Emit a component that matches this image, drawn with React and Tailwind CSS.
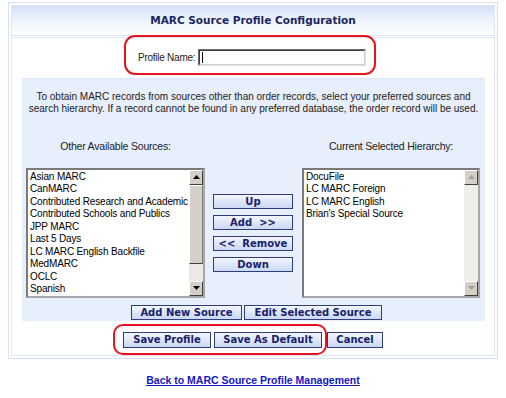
import React from "react";

const btn =
  "h-[15px] border border-[#2f3d7c] bg-gradient-to-b from-[#f2f6fe] to-[#cbd8f3] text-[#17226a] font-bold text-[10px] leading-[13px] flex items-center justify-center whitespace-nowrap";
const vfont = { fontFamily: '"DejaVu Sans", Verdana, sans-serif' };
const afont = { fontFamily: '"Liberation Sans", Arial, sans-serif' };

function Arrow({ dir, disabled }) {
  return (
    <div className="w-[14px] h-[15px] bg-[#d4d0c8] border border-t-white border-l-white border-b-[#404040] border-r-[#404040] flex items-center justify-center shrink-0">
      <svg width="7" height="4" viewBox="0 0 7 4">
        {dir === "up" ? (
          <polygon points="3.5,0 7,4 0,4" fill={disabled ? "#a0a0a0" : "#000"} />
        ) : (
          <polygon points="0,0 7,0 3.5,4" fill={disabled ? "#a0a0a0" : "#000"} />
        )}
      </svg>
    </div>
  );
}

function ListBox({ items, active, w }) {
  return (
    <div
      className={
        (w || "w-[179px]") +
        " h-[130px] border-2 border-t-[#7a7a7a] border-l-[#7a7a7a] border-b-[#a8a8a8] border-r-[#a8a8a8] bg-white flex"
      }
    >
      <div className="flex-1 pl-[2px] pt-[1px] overflow-hidden" style={afont}>
        {items.map((t) => (
          <div key={t} className="text-[10px] tracking-[-0.15px] leading-[12.5px] text-black whitespace-nowrap">
            {t}
          </div>
        ))}
      </div>
      <div className="w-[14px] flex flex-col bg-[#eeece8]">
        <Arrow dir="up" disabled={!active} />
        {active ? (
          <>
            <div className="h-[79px] bg-[#d4d0c8] border border-t-white border-l-white border-b-[#404040] border-r-[#808080]" />
            <div className="flex-1 bg-[#ece9e4]" />
          </>
        ) : (
          <div className="flex-1 bg-[#efede9]" />
        )}
        <Arrow dir="down" disabled={!active} />
      </div>
    </div>
  );
}

export default function App() {
  const left = [
    "Asian MARC",
    "CanMARC",
    "Contributed Research and Academic",
    "Contributed Schools and Publics",
    "JPP MARC",
    "Last 5 Days",
    "LC MARC English Backfile",
    "MedMARC",
    "OCLC",
    "Spanish",
  ];
  const right = ["DocuFile", "LC MARC Foreign", "LC MARC English", "Brian's Special Source"];
  return (
    <div className="w-[506px] h-[398px] bg-white overflow-hidden text-[#222]" style={afont}>
      <div className="ml-[8px] mt-[2px] w-[490px] border border-[#d6e0f4] p-[2px] flex flex-col gap-[1px]">
        <div className="h-[31px] border border-[#dce5f6] bg-gradient-to-b from-[#d3e0f8] via-[#eef3fc] to-white flex items-center justify-center">
          <span className="text-[10.5px] font-bold text-[#1c2660] mt-[1px]" style={vfont}>
            MARC Source Profile Configuration
          </span>
        </div>
        <div className="h-[319px] border border-[#dce5f6] bg-white flex flex-col">
          <div className="ml-[112px] mt-[-3px] w-[252px] h-[40px] border-2 border-[#e8141c] rounded-[11px] flex items-center">
            <span className="ml-[12px] text-[10px] tracking-[-0.25px] text-[#222] mt-[5px] whitespace-nowrap shrink-0">
              Profile Name:
            </span>
            <div className="ml-[3px] mt-[5px] w-[168px] shrink-0 h-[17px] border border-t-[#6b6b6b] border-l-[#6b6b6b] border-b-[#e4e2dc] border-r-[#e4e2dc] bg-white">
              <div className="w-full h-full border border-t-[#404040] border-l-[#404040] border-b-[#d4d0c8] border-r-[#d4d0c8] flex items-center pl-[2px]">
                <div className="w-[1px] h-[11px] bg-black" />
              </div>
            </div>
          </div>
          <div className="ml-[10px] mt-[3px] w-[463px] h-[244px] bg-[#e7eefc] border-t border-[#dde6f8] flex flex-col">
            <div className="pt-[12px] text-center text-[10px] leading-[12.5px] text-[#222] whitespace-nowrap">
              To obtain MARC records from sources other than order records, select your preferred sources and
              <br />
              search hierarchy. If a record cannot be found in any preferred database, the order record will be used.
            </div>
            <div className="mt-[24px] flex text-[10.5px] tracking-[-0.2px] leading-[12px] text-[#222]">
              <div className="ml-[4px] w-[179px] text-center">Other Available Sources:</div>
              <div className="ml-[97px] w-[178px] text-center">Current Selected Hierarchy:</div>
            </div>
            <div className="mt-[16px] flex items-center">
              <div className="ml-[4px]">
                <ListBox items={left} active />
              </div>
              <div className="ml-[8px] w-[80px] flex flex-col gap-[6px]" style={vfont}>
                <div className={btn}>Up</div>
                <div className={btn}>Add&nbsp;&nbsp;&gt;&gt;</div>
                <div className={btn}>&lt;&lt;&nbsp;&nbsp;Remove</div>
                <div className={btn}>Down</div>
              </div>
              <div className="ml-[9px]">
                <ListBox items={right} w="w-[178px]" />
              </div>
            </div>
            <div className="mt-[7px] flex justify-center gap-[2px] pl-[6px]" style={vfont}>
              <div className={btn + " w-[111px]"}>Add New Source</div>
              <div className={btn + " w-[138px]"}>Edit Selected Source</div>
            </div>
          </div>
          <div className="mt-[3px] flex items-center" style={vfont}>
            <div className="ml-[101px] h-[31px] border-2 border-[#e8141c] rounded-[10px] pl-[8px] pr-[3px] flex items-center gap-[3px]">
              <div className={btn + " w-[88px] h-[16px]"}>Save Profile</div>
              <div className={btn + " w-[108px] h-[16px]"}>Save As Default</div>
            </div>
            <div className={btn + " w-[56px] h-[16px]"}>Cancel</div>
          </div>
        </div>
      </div>
      <div className="mt-[14px] flex justify-center">
        <a href="#" className="text-[10.5px] font-bold text-[#1616c8] underline">
          Back to MARC Source Profile Management
        </a>
      </div>
    </div>
  );
}
